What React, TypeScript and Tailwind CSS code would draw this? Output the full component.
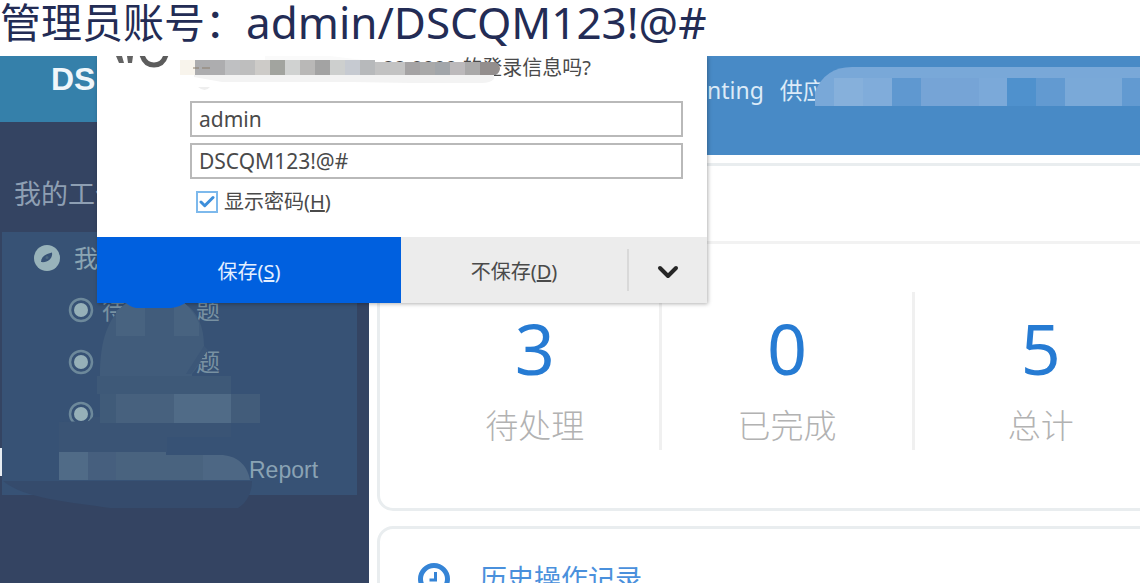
import { Check, ChevronDown } from 'lucide-react';

const stats = [
  { label: '待处理', value: 3 },
  { label: '已完成', value: 0 },
  { label: '总计', value: 5 }
];

const queues = [
  { id: 'first', start: '待', end: '题' },
  { id: 'second', start: '', end: '题' },
  { id: 'third', start: '', end: '' }
];

const topTiles = [
  { x: 834, w: 29, fill: '#86b0db' },
  { x: 863, w: 29, fill: '#80acda' },
  { x: 892, w: 29, fill: '#5f98d0' },
  { x: 921, w: 58, fill: '#76a4d6' },
  { x: 979, w: 28, fill: '#7ba9d9' },
  { x: 1007, w: 29, fill: '#4f91cd' },
  { x: 1036, w: 29, fill: '#629ad1' },
  { x: 1065, w: 57, fill: '#7aa9d8' },
  { x: 1122, w: 29, fill: '#629ad1' }
];

const urlTiles = [
  '#f8f4ec', '#acacae', '#adadaf', '#bfc0c2', '#bebebe', '#cdcbc8', '#a2a49f', '#d0d2d1',
  '#b9b8b7', '#a3a3a3', '#cdcfce', '#c6cad1', '#b7b9bb', '#c2c2c2', '#c3c3c3', '#a5a3a4',
  '#a9a9a9', '#a2a6aa', '#bcb9bb', '#aaa9a9', '#938e8d'
];

const CompassIcon = () => (
  <svg className="h-[26px] w-[26px] shrink-0" viewBox="0 0 26 26" aria-hidden="true">
    <circle cx="13" cy="13" r="13" fill="#98b3ba" />
    <path d="M7 17c0-5 4-8 11-9.500C19 13 14 18 7 17z" fill="#375275" />
    <circle cx="13" cy="12.500" r="1.500" fill="#4b687f" />
  </svg>
);

const DotIcon = () => (
  <svg className="h-[26px] w-[26px] shrink-0" viewBox="0 0 26 26" aria-hidden="true">
    <circle cx="13" cy="13" r="11" fill="none" stroke="#6d899b" strokeWidth="2.500" />
    <circle cx="13" cy="13" r="7" fill="#96b0b8" />
  </svg>
);

const SidebarRedaction = () => (
  <svg
    className="pointer-events-none absolute left-0 top-0 h-[527px] w-[369px]"
    viewBox="0 56 369 527"
    aria-hidden="true"
  >
    <path d="M100 375C100 340 108 318 126 303h58c14 9 20 24 20 43 0 12-5 20-12 28v20h-92z" fill="#415c7b" />
    <path d="M204 346l4 4-17 24h-5z" fill="#3c5778" />
    <path d="M116 311l10-7h19v32h-29zM174 303h10q9 7 15 20v13h-25z" fill="#486380" />
    <path d="M125 302h62q-7 5-16 6h-35q-6-1-11-6z" fill="#0060df" />
    <path d="M97 376h134v18H97z" fill="#3e5978" />
    <path d="M100 394h16v29h-16z" fill="#405b79" />
    <path d="M116 394h58v29h-58z" fill="#47617e" />
    <path d="M174 394h57v29h-57z" fill="#506b87" />
    <path d="M231 394h29v29h-29z" fill="#425c7a" />
    <path d="M59 422l30-1 4-4h7v6h131v14h-64v15H59z" fill="#3a5475" />
    <path d="M59 452h29v28H59z" fill="#506b87" />
    <path d="M88 452h28v28H88z" fill="#465f7e" />
    <path d="M116 452h50v3h37v25h-87z" fill="#49637f" />
    <path d="M203 455h17c16 0 27 9 30 25h-47z" fill="#4d6784" />
    <path d="M3 481h249c0 11-5 22-14 27H110c-40-6-85-9-107-27z" fill="#354b6c" />
    <path d="M0 448h2v28H0z" fill="#e8edf2" />
  </svg>
);

const Sidebar = () => (
  <aside className="w-[369px] shrink-0 bg-[#344462]">
    <div className="flex h-[66px] items-center bg-[#3580aa] pb-5 pl-[51px] font-['Liberation_Sans',sans-serif] text-[32px] font-bold text-[#f0f6fa]">
      DS
    </div>
    <nav>
      <h2 className="pl-[14px] pt-14 text-[27px] leading-8 text-[#8e9fb3]">我的工作</h2>
      <div className="ml-[2px] mr-3 mt-[22px] h-[263px] bg-[#375275] pt-3 text-[#8ba5b3]">
        <a href="#mine" className="flex h-7 items-center gap-[14px] pl-8 text-2xl">
          <CompassIcon />
          我
        </a>
        <ul className="mt-6 space-y-6">
          {queues.map((queue) => (
            <li key={queue.id}>
              <a href={`#${queue.id}`} className="flex h-7 items-center gap-2 pl-[66px] text-2xl text-[#7891a2]">
                <DotIcon />
                <span className="flex w-[118px] justify-between">
                  <span>{queue.start}</span>
                  <span>{queue.end}</span>
                </span>
              </a>
            </li>
          ))}
        </ul>
        <a
          href="#report"
          className="mt-7 block pl-[247px] font-['Liberation_Sans',sans-serif] text-[23px] leading-7 text-[#8aa3b4]"
        >
          Report
        </a>
      </div>
    </nav>
  </aside>
);

const TopBar = () => (
  <header className="relative h-[99px] bg-[#488ac6]">
    <div className="flex gap-4 pl-[338px] pt-5 text-[23px] leading-7 text-[#dcebf8]">
      <span>nting</span>
      <span>供应</span>
    </div>
    <svg
      className="absolute left-[446px] top-[11px] h-[39px] w-[336px]"
      viewBox="815 67 336 39"
      aria-hidden="true"
    >
      <path d="M815 106V92q10-25 37-25h299v39z" fill="#79a8d8" />
      {topTiles.map((tile) => (
        <rect key={tile.x} x={tile.x} y="78" width={tile.w} height="28" fill={tile.fill} />
      ))}
    </svg>
  </header>
);

const SaveDialog = () => (
  <form
    className="absolute left-[97px] top-0 w-[610px] bg-white text-xl text-[#4a4a4a] shadow-[1px_1px_4px_rgba(0,0,0,0.3)]"
    onSubmit={(e) => e.preventDefault()}
  >
    <div className="relative h-[45px] overflow-hidden">
      <p className="flex pl-[98px] leading-6">
        <span className="w-[188px]">http://1</span>
        <span>22:8080 的登录信息吗?</span>
      </p>
      <svg className="absolute left-0 top-0 h-[45px] w-[610px]" viewBox="97 56 610 45" aria-hidden="true">
        <path d="M142 55q3 10 12 10t12-10" fill="none" stroke="#5c5c5c" strokeWidth="5" />
        <path d="M116 56h6l2 7h-5zM127 56h6l-1 7h-4z" fill="#636363" />
        <path d="M194 74h300v5q-4 4-12 4h-70l-60-1H222l-28-5z" fill="#f3f3f3" />
        <path d="M265 56h65l50 6v4H265z" fill="#fafafa" />
        {urlTiles.map((fill, i) => (
          <rect key={i} x={180 + i * 15} y={i < 13 ? 60 : 62} width="15" height={i < 13 ? 15 : 13} fill={fill} />
        ))}
        <path d="M495 62q5 2 5 7-1 5-5 6z" fill="#938e8d" />
        <path d="M193 68h6M202 68h8" stroke="#8c7e6c" strokeWidth="1" />
        <path d="M198 87h12q-5 6-12 0z" fill="#eeeeee" />
      </svg>
    </div>
    <div className="space-y-[6px] pl-[93px] pr-6">
      <input
        aria-label="用户名"
        defaultValue="admin"
        className="block h-9 w-full border-2 border-[#b9b9b9] bg-white px-[7px] text-[21px]"
      />
      <input
        aria-label="密码"
        defaultValue="DSCQM123!@#"
        className="block h-9 w-full border-2 border-[#b9b9b9] bg-white px-[7px] text-[21px]"
      />
    </div>
    <div className="flex h-[58px] items-center gap-[6px] pb-3 pl-[99px]">
      <span className="relative flex">
        <input
          id="show"
          type="checkbox"
          defaultChecked
          className="peer h-[22px] w-[22px] appearance-none border-2 border-[#7db9ec] bg-white"
        />
        <Check
          className="pointer-events-none invisible absolute left-[2px] top-[2px] h-[18px] w-[18px] text-[#3d8fdb] peer-checked:visible"
          strokeWidth={4}
        />
      </span>
      <label htmlFor="show">
        显示密码(<u>H</u>)
      </label>
    </div>
    <div className="flex h-[66px]">
      <button type="submit" className="w-[304px] bg-[#0060df] pt-1 text-[#e4efff]">
        保存(<u>S</u>)
      </button>
      <div className="flex flex-1 items-center bg-[#ececec]">
        <button type="button" className="h-full flex-1 pt-1">
          不保存(<u>D</u>)
        </button>
        <button
          type="button"
          aria-label="更多选项"
          className="flex h-[42px] w-20 items-center justify-center border-l-2 border-[#d9d9d9] pt-1 text-[#262626]"
        >
          <ChevronDown className="h-8 w-8" strokeWidth={3} />
        </button>
      </div>
    </div>
  </form>
);

const ClockIcon = () => (
  <svg className="h-8 w-8 text-[#3584d6]" viewBox="0 0 32 32" fill="none" stroke="currentColor" aria-hidden="true">
    <circle cx="16" cy="16" r="13.500" strokeWidth="5" />
    <path d="M17.500 9v8h-6" strokeWidth="3" />
  </svg>
);

const Dashboard = () => (
  <div className="-mr-[60px] ml-2 mt-2 space-y-[15px]">
    <section className="h-[348px] rounded-2xl border-[3px] border-[#e9edef] bg-white">
      <div className="h-[78px] border-b-[3px] border-[#f2f2f2]" />
      <dl className="mt-12 grid grid-cols-3 divide-x-[3px] divide-[#f0f0f0] px-[30px]">
        {stats.map((stat) => (
          <div key={stat.label} className="flex h-[158px] flex-col-reverse justify-end gap-3 pt-2 text-center">
            <dt className="text-[33px] font-light leading-9 text-[#b2b2b2]">{stat.label}</dt>
            <dd className="text-[70px] leading-[96px] text-[#267bd3]">{stat.value}</dd>
          </div>
        ))}
      </dl>
    </section>
    <section className="h-[348px] rounded-2xl border-[3px] border-[#e9edef] bg-white">
      <h3 className="flex items-center gap-[30px] pl-[38px] pt-[30px] text-[27px] leading-10 text-[#4a90dc]">
        <ClockIcon />
        历史操作记录
      </h3>
    </section>
  </div>
);

export default function App() {
  return (
    <div className="flex h-screen flex-col overflow-hidden bg-white font-['Noto_Sans','Noto_Sans_CJK_SC',sans-serif]">
      <h1 className="flex h-14 shrink-0 items-center whitespace-nowrap pb-3 leading-none text-[#232c55]">
        <span className="text-[41px]">管理员账号：</span>
        <span className="text-[44px]">admin/DSCQM123!@#</span>
      </h1>
      <div className="relative flex min-h-0 flex-1 overflow-hidden">
        <Sidebar />
        <main className="min-w-0 flex-1">
          <TopBar />
          <Dashboard />
        </main>
        <SaveDialog />
        <SidebarRedaction />
      </div>
    </div>
  );
}
